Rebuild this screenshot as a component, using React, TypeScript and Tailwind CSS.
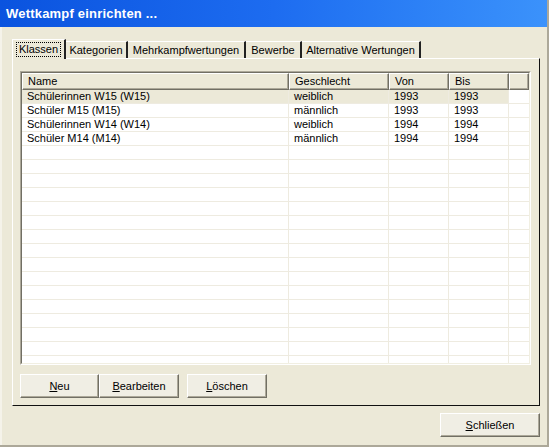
import React from 'react';

const rows = [
  { name: 'Schülerinnen W15 (W15)', sex: 'weiblich', von: '1993', bis: '1993' },
  { name: 'Schüler M15 (M15)', sex: 'männlich', von: '1993', bis: '1993' },
  { name: 'Schülerinnen W14 (W14)', sex: 'weiblich', von: '1994', bis: '1994' },
  { name: 'Schüler M14 (M14)', sex: 'männlich', von: '1994', bis: '1994' },
];

const tabs = [
  { label: 'Kategorien', w: 'w-[62px]' },
  { label: 'Mehrkampfwertungen', w: 'w-[118px]' },
  { label: 'Bewerbe', w: 'w-[56px]' },
  { label: 'Alternative Wertungen', w: 'w-[119px]' },
];

function Btn({ first, rest, className }: { first: string; rest: string; className: string }) {
  return (
    <button
      className={`h-[24px] bg-[#f0eee4] border border-t-white border-l-white border-r-[#716f64] border-b-[#716f64] shadow-[inset_-1px_-1px_0_#aca899] text-[11px] text-black ${className}`}
    >
      <span className="underline">{first}</span>
      {rest}
    </button>
  );
}

export default function App() {
  const empty = Array.from({ length: 16 });
  return (
    <div
      className="w-[549px] h-[447px] bg-[#ece9d8] flex flex-col border-r-2 border-b-2 border-[#aca899] overflow-hidden"
      style={{ fontFamily: '"Liberation Sans", Arial, sans-serif' }}
    >
      {/* Title bar */}
      <div className="h-[27px] shrink-0 bg-gradient-to-r from-[#0a53df] via-[#1d6cf0] to-[#3b92fb] flex items-center pl-[6px]">
        <span className="text-white font-bold text-[13px] tracking-[0.2px]">Wettkampf einrichten ...</span>
      </div>

      <div className="flex-1 flex flex-col border-l-2 border-[#f5f3ea] pl-[10px] pt-[11px]">
        {/* Tabs */}
        <div className="flex items-end h-[20px]">
          <div className="w-[54px] h-[20px] border-l border-t border-white border-r-2 border-r-[#222] flex items-center justify-center relative z-10 -mb-px bg-[#ece9d8]">
            <span className="text-[11px] text-black outline outline-1 outline-dotted outline-black px-[2px] leading-[13px]">Klassen</span>
          </div>
          {tabs.map((t) => (
            <div
              key={t.label}
              className={`${t.w} h-[17px] border-t border-white border-r-2 border-r-[#222] flex items-center justify-center`}
            >
              <span className="text-[11px] text-black">{t.label}</span>
            </div>
          ))}
        </div>

        {/* Panel */}
        <div className="w-[528px] h-[348px] border-l border-t border-white border-r border-b border-r-[#111] border-b-[#111] flex flex-col pl-[7px] pt-[12px]">
          {/* List view */}
          <div className="w-[511px] h-[294px] border border-t-[#aca899] border-l-[#aca899] border-r-white border-b-white">
            <div className="w-full h-full border border-t-[#716f64] border-l-[#716f64] border-r-[#f1efe2] border-b-[#f1efe2] bg-white overflow-hidden">
              {/* Header */}
              <div className="flex h-[17px] text-[11px] text-black">
                {[
                  ['Name', 'w-[267px]'],
                  ['Geschlecht', 'w-[100px]'],
                  ['Von', 'w-[60px]'],
                  ['Bis', 'w-[60px]'],
                  ['', 'flex-1'],
                ].map(([h, w], i) => (
                  <div
                    key={i}
                    className={`${w} h-full bg-[#ece9d8] border-t border-l border-white border-r border-b border-r-[#716f64] border-b-[#716f64] shadow-[inset_-1px_-1px_0_#aca899] pl-[5px] flex items-center`}
                  >
                    {h}
                  </div>
                ))}
              </div>
              {/* Rows */}
              {rows.map((r, i) => (
                <div key={i} className="flex h-[14px] text-[11px] text-black leading-[13px]">
                  <div className={`w-[267px] pl-[5px] border-b border-r border-[#eeebe0] ${i === 0 ? 'bg-[#ece9d8]' : ''}`}>{r.name}</div>
                  <div className={`w-[100px] pl-[5px] border-b border-r border-[#eeebe0] ${i === 0 ? 'bg-[#ece9d8]' : ''}`}>{r.sex}</div>
                  <div className={`w-[60px] pl-[5px] border-b border-r border-[#eeebe0] ${i === 0 ? 'bg-[#ece9d8]' : ''}`}>{r.von}</div>
                  <div className={`w-[60px] pl-[5px] border-b border-r border-[#eeebe0] ${i === 0 ? 'bg-[#ece9d8]' : ''}`}>{r.bis}</div>
                  <div className="flex-1 border-b border-[#eeebe0]" />
                </div>
              ))}
              {empty.map((_, i) => (
                <div key={i} className="flex h-[14px]">
                  <div className="w-[267px] border-b border-r border-[#eeebe0]" />
                  <div className="w-[100px] border-b border-r border-[#eeebe0]" />
                  <div className="w-[60px] border-b border-r border-[#eeebe0]" />
                  <div className="w-[60px] border-b border-r border-[#eeebe0]" />
                  <div className="flex-1 border-b border-[#eeebe0]" />
                </div>
              ))}
            </div>
          </div>

          {/* Buttons */}
          <div className="flex mt-[9px]">
            <Btn first="N" rest="eu" className="w-[79px]" />
            <Btn first="B" rest="earbeiten" className="w-[80px]" />
            <Btn first="L" rest="öschen" className="w-[80px] ml-[8px]" />
          </div>
        </div>

        {/* Footer */}
        <div className="flex justify-end pr-[7px] mt-[7px]">
          <Btn first="S" rest="chließen" className="w-[100px]" />
        </div>
      </div>
    </div>
  );
}
